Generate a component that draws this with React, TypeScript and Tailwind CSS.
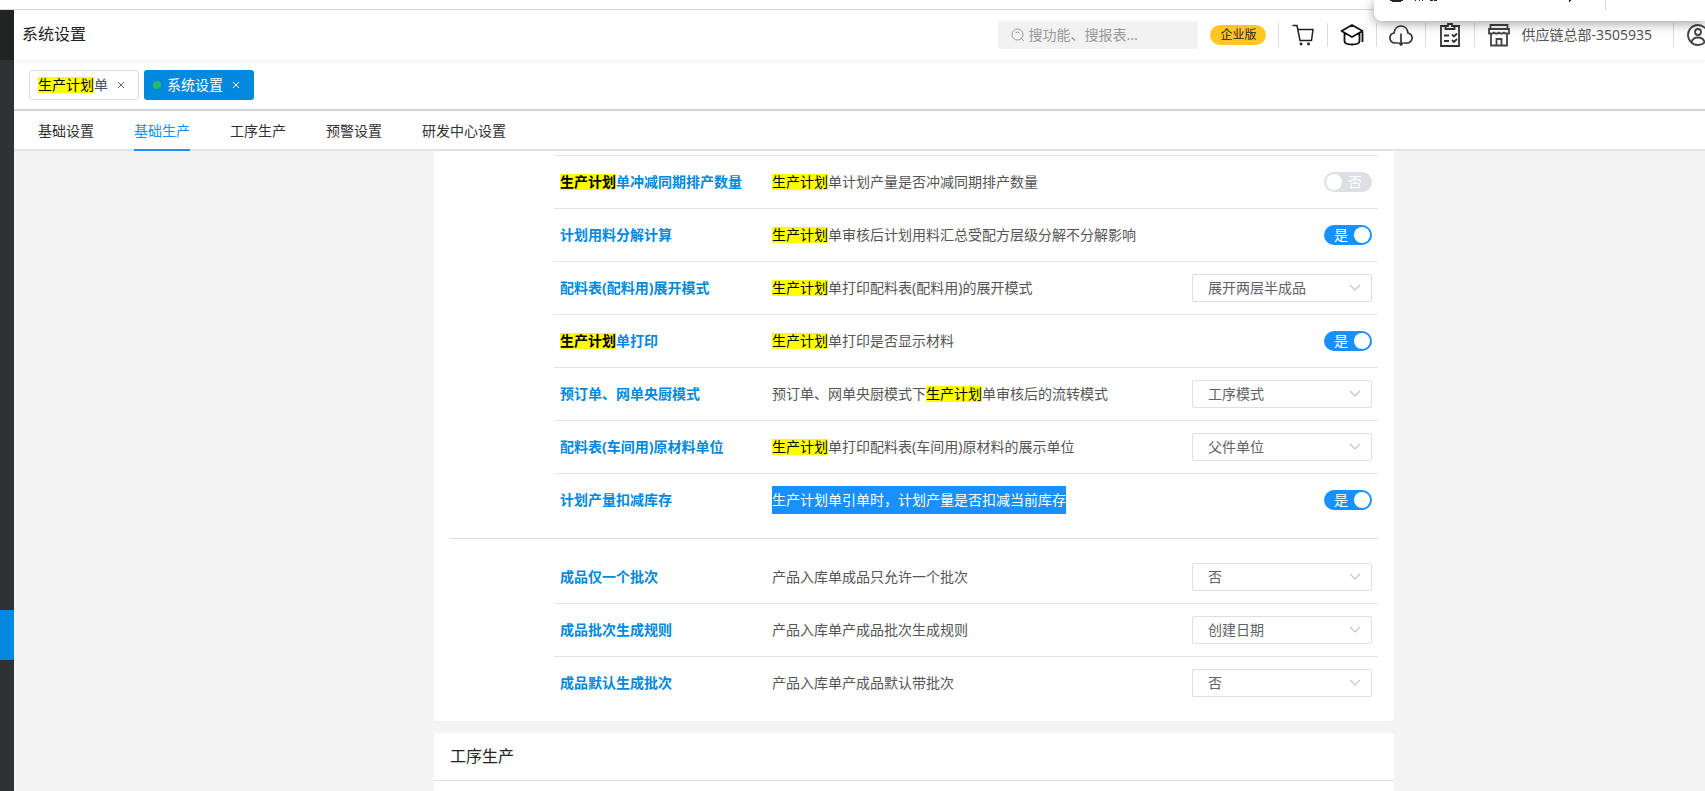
import React from "react";

interface Setting {
  label: string;
  desc: string;
  checked?: boolean;
  value?: string;
  selected?: boolean;
}

const KEYWORD = "生产计划";

const tabs = ["基础设置", "基础生产", "工序生产", "预警设置", "研发中心设置"];

const planSettings: Setting[] = [
  { label: "生产计划单冲减同期排产数量", desc: "生产计划单计划产量是否冲减同期排产数量", checked: false },
  { label: "计划用料分解计算", desc: "生产计划单审核后计划用料汇总受配方层级分解不分解影响", checked: true },
  { label: "配料表(配料用)展开模式", desc: "生产计划单打印配料表(配料用)的展开模式", value: "展开两层半成品" },
  { label: "生产计划单打印", desc: "生产计划单打印是否显示材料", checked: true },
  { label: "预订单、网单央厨模式", desc: "预订单、网单央厨模式下生产计划单审核后的流转模式", value: "工序模式" },
  { label: "配料表(车间用)原材料单位", desc: "生产计划单打印配料表(车间用)原材料的展示单位", value: "父件单位" },
  { label: "计划产量扣减库存", desc: "生产计划单引单时，计划产量是否扣减当前库存", checked: true, selected: true },
];

const batchSettings: Setting[] = [
  { label: "成品仅一个批次", desc: "产品入库单成品只允许一个批次", value: "否" },
  { label: "成品批次生成规则", desc: "产品入库单产成品批次生成规则", value: "创建日期" },
  { label: "成品默认生成批次", desc: "产品入库单产成品默认带批次", value: "否" },
];

function Highlight({ text }: { text: string }) {
  return (
    <>
      {text.split(KEYWORD).map((part, i) => (
        <React.Fragment key={i}>
          {i > 0 && <mark className="inline-block h-4 bg-[#ffff00] leading-4 text-black">{KEYWORD}</mark>}
          {part}
        </React.Fragment>
      ))}
    </>
  );
}

function Switch({ id, defaultChecked }: { id: string; defaultChecked: boolean }) {
  const [checked, setChecked] = React.useState(defaultChecked);

  return (
    <label
      className={
        checked
          ? "relative flex h-5 w-12 cursor-pointer items-center rounded-full bg-[#1890ff] pl-[10px] text-sm leading-5 text-white"
          : "relative flex h-5 w-12 cursor-pointer items-center justify-end rounded-full bg-[#dcdfe6] pr-[10px] text-sm leading-5 text-white"
      }
    >
      <input
        id={id}
        type="checkbox"
        className="sr-only"
        checked={checked}
        onChange={(e) => setChecked(e.target.checked)}
      />
      {checked ? "是" : "否"}
      <span
        className={
          checked
            ? "absolute right-[2px] top-[2px] h-4 w-4 rounded-full bg-white"
            : "absolute left-[2px] top-[2px] h-4 w-4 rounded-full bg-white"
        }
      />
    </label>
  );
}

function Select({ id, value }: { id: string; value: string }) {
  return (
    <div className="relative w-[180px]">
      <select
        id={id}
        defaultValue={value}
        className="block h-7 w-full appearance-none rounded-[2px] border border-[#dcdfe6] bg-white px-[15px] text-sm leading-6 text-[#606266]"
      >
        <option>{value}</option>
      </select>
      <svg
        className="pointer-events-none absolute right-[11px] top-2 h-3 w-3"
        viewBox="0 0 12 12"
        fill="none"
        stroke="#c0c4cc"
        strokeWidth="1.2"
      >
        <path d="M1 3l5 5 5-5" />
      </svg>
    </div>
  );
}

function SettingRow({ setting, id }: { setting: Setting; id: string }) {
  return (
    <div className="flex h-[53px] items-center border-t border-[#e4e4e4] px-[6px] text-sm first:border-t-0 first:h-[52px]">
      <label htmlFor={id} className="w-[212px] font-bold text-[#0089de]">
        <Highlight text={setting.label} />
      </label>
      <p className="flex-1 text-[#555]">
        {setting.selected ? (
          <span className="inline-block bg-[#1890ff] leading-7 text-white">{setting.desc}</span>
        ) : (
          <Highlight text={setting.desc} />
        )}
      </p>
      {setting.value ? (
        <Select id={id} value={setting.value} />
      ) : (
        <Switch id={id} defaultChecked={!!setting.checked} />
      )}
    </div>
  );
}

function Divider() {
  return <span className="h-6 w-px shrink-0 bg-[#dcdcdc]" />;
}

function IconButton({ label, children }: { label: string; children: React.ReactNode }) {
  return (
    <button type="button" aria-label={label} className="flex w-12 shrink-0 items-center justify-center">
      {children}
    </button>
  );
}

function Header() {
  return (
    <header className="relative z-10 flex h-[50px] shrink-0 items-center bg-white pl-2 shadow-[0_1px_4px_rgba(0,21,41,0.08)]">
      <h1 className="pb-[2px] text-base text-[#222]">系统设置</h1>
      <div className="-mr-1 ml-auto flex shrink-0 items-center">
        <label className="flex h-7 w-[200px] items-center rounded-[2px] bg-[#f2f2f2] pl-[13px]">
          <svg className="h-[14px] w-[14px] shrink-0" viewBox="0 0 14 14" fill="none" stroke="#999">
            <circle cx="6.5" cy="6.5" r="5.5" />
            <path d="M10.5 10.5L13 13M4.5 5a3 3 0 0 1 4 0" />
          </svg>
          <input
            type="text"
            aria-label="搜索"
            placeholder="搜功能、搜报表..."
            className="ml-[3px] w-full bg-transparent text-sm outline-none placeholder:text-[#999]"
          />
        </label>
        <span className="mx-3 rounded-full bg-[#fec723] px-[10px] text-xs leading-5 text-[#222]">企业版</span>
        <Divider />
        <IconButton label="购物车">
          <svg className="h-6 w-6" viewBox="0 0 24 24" fill="none" stroke="#222" strokeWidth="1.5">
            <path d="M1.500 2.500H6l3 15h11.500L22 6.500H7" />
            <circle cx="10" cy="21" r="0.700" fill="#222" />
            <circle cx="17.500" cy="21" r="0.700" fill="#222" />
          </svg>
        </IconButton>
        <Divider />
        <IconButton label="学习中心">
          <svg
            className="h-6 w-6"
            viewBox="0 0 24 24"
            fill="none"
            stroke="#111"
            strokeWidth="1.8"
            strokeLinejoin="round"
          >
            <path d="M12 2L1.500 8 12 14l10.500-6zM4.500 10.500V18c0 3 3 3.500 7.500 3.500s7.500-.5 7.500-3.500v-7.500M22.500 9v10" />
          </svg>
        </IconButton>
        <Divider />
        <IconButton label="下载">
          <svg className="h-6 w-6" viewBox="0 0 24 24" fill="none" stroke="#333" strokeWidth="1.7">
            <path d="M9 20H6A5 5 0 0 1 .9 15c0-2.600 1.600-4.400 4.200-5C5.500 5.500 8.500 3 12 3s6.500 2.500 6.900 7c2.600.6 4.200 2.400 4.200 5a5 5 0 0 1-5.100 5h-3M12 10.500v11.500M9.500 19.500L12 22l2.500-2.500" />
          </svg>
        </IconButton>
        <Divider />
        <IconButton label="任务清单">
          <svg className="h-6 w-6" viewBox="0 0 24 24" fill="none" stroke="#333" strokeWidth="1.800">
            <path d="M7.500 3H3v20h18V3h-4.500M7.500 6V3H10V1h4v2h2.500v3zM6 12.500h5M6 18h5M14 11.500l2 2 3-3M14 17l2 2 3-3" />
          </svg>
        </IconButton>
        <Divider />
        <button type="button" className="flex items-center pl-3 pr-[21px] text-sm text-[#555]">
          <svg className="mr-[10px] h-6 w-6" viewBox="0 0 24 24" fill="none" stroke="#444" strokeWidth="1.800">
            <path d="M3.500 6V2h17v4M2 6h20v4.500h-3.500l-1.500-1-1.500 1h-2l-1.500-1-1.500 1h-2l-1.500-1-1.500 1H2zM4 11v11.500h16V11M9.500 22v-6h5v6" />
          </svg>
          供应链总部-3505935
        </button>
        <Divider />
        <button type="button" aria-label="用户" className="ml-[13px]">
          <svg className="h-[22px] w-[22px]" viewBox="0 0 22 22" fill="none" stroke="#444" strokeWidth="1.800">
            <circle cx="11" cy="11" r="10" />
            <circle cx="11" cy="8" r="3" />
            <path d="M4.500 18c1-3.500 3.500-4.500 6.500-4.500s5.500 1 6.500 4.500" />
          </svg>
        </button>
      </div>
    </header>
  );
}

export default function App() {
  return (
    <div className="relative flex h-screen flex-col overflow-hidden bg-white font-['Noto_Sans','Noto_Sans_CJK_SC',sans-serif]">
      <div className="h-[10px] shrink-0 border-b border-[#dcdcdc]" />
      <div className="flex min-h-0 flex-1">
        <aside className="flex w-[14px] shrink-0 flex-col bg-[#303133]">
          <div className="h-[50px] bg-[#222423]" />
          <div className="mt-[550px] h-[50px] bg-[#0089de]" />
        </aside>
        <div className="flex min-w-0 flex-1 flex-col">
          <Header />
          <div className="flex h-[51px] shrink-0 items-center gap-[5px] border-b-2 border-[#cfd1d8] pl-[15px] text-sm">
            <div className="flex h-[30px] w-[110px] items-center rounded-[3px] border border-[#d8dce5] pl-2 text-[#495060]">
              <a href="#plan"><Highlight text="生产计划单" /></a>
              <button type="button" aria-label="关闭" className="ml-[9px] text-[#666]">
                <svg className="h-2 w-2" viewBox="0 0 8 8" stroke="currentColor"><path d="M1 1l6 6m0-6l-6 6" /></svg>
              </button>
            </div>
            <div className="flex h-[30px] w-[110px] items-center rounded-[3px] bg-[#0089de] pl-[9px] text-white">
              <span className="mr-[6px] h-2 w-2 rounded-full bg-[#27bb63]" />
              <a href="#settings">系统设置</a>
              <button type="button" aria-label="关闭" className="ml-[9px]">
                <svg className="h-2 w-2" viewBox="0 0 8 8" stroke="currentColor"><path d="M1 1l6 6m0-6l-6 6" /></svg>
              </button>
            </div>
          </div>
          <nav className="flex h-10 shrink-0 gap-10 border-b-2 border-[#dfe3ec] pl-6 text-sm text-[#303133]">
            {tabs.map((tab) => (
              <button
                key={tab}
                type="button"
                className={
                  tab === "基础生产"
                    ? "-mb-[2px] border-b-2 border-[#1890ff] pt-[2px] text-[#1890ff]"
                    : "-mb-[2px] border-b-2 border-transparent pt-[2px]"
                }
              >
                {tab}
              </button>
            ))}
          </nav>
          <main className="flex min-h-0 flex-1 justify-center overflow-hidden bg-[#f4f4f4] pl-[109px]">
            <div className="w-full max-w-[960px]">
              <section className="rounded-b bg-white px-4 pb-3 pt-1">
                <div className="border-b border-[#dcdcdc] pb-3 pl-[104px]">
                  <div className="border-t border-[#e4e4e4]">
                    {planSettings.map((s, i) => (
                      <SettingRow key={s.label} setting={s} id={`plan-${i}`} />
                    ))}
                  </div>
                </div>
                <div className="pl-[104px] pt-3">
                  {batchSettings.map((s, i) => (
                    <SettingRow key={s.label} setting={s} id={`batch-${i}`} />
                  ))}
                </div>
              </section>
              <section className="mt-3 h-[100px] rounded-t bg-white">
                <h2 className="h-12 border-b border-[#dcdcdc] px-4 text-base leading-[46px] text-[#222]">工序生产</h2>
              </section>
            </div>
          </main>
        </div>
      </div>
      {/* floating window that hangs over the top right corner */}
      <div className="absolute right-0 top-0 z-20 flex h-[21px] w-[331px] rounded-bl-lg bg-white shadow-[0_2px_12px_rgba(0,0,0,0.4)]">
        <svg className="ml-4 h-[2px] w-[215px]" viewBox="0 0 215 2" fill="#222">
          <path d="M0 0h13v1H0zM2 1h9v1H2zM25 0h1v1h-1zM29 0h1v1h-1zM32 0h1v1h-1zM40 0h3v1h-3zM44 0h3v1h-3zM179 0h2v1h-1v1h-1z" />
        </svg>
        <span className="h-[11px] w-px bg-[#cfe0f5]" />
      </div>
    </div>
  );
}
